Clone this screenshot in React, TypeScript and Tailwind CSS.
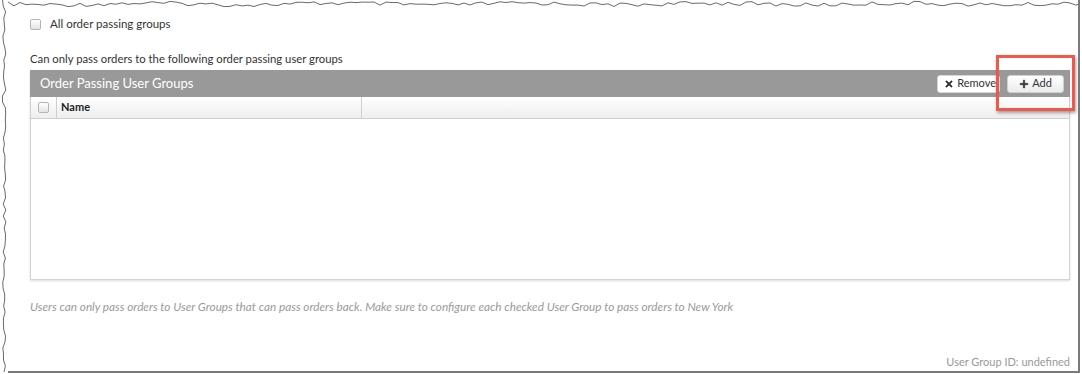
import { FC } from "react";
import { FaPlus, FaXmark } from "react-icons/fa6";

const font = { fontFamily: "Lato, 'Open Sans', sans-serif" };

// torn paper edge, deterministic jitter
const jitter = (i: number) => {
  const s = Math.sin(i * 12.9898) * 43758.5453;
  return s - Math.floor(s);
};

const topPoints = Array.from({ length: 180 }, (_, i) => {
  const x = i * 6;
  const y = 2 + jitter(i) * 4 + Math.sin(i / 5) * 0.8;
  return `${x},${y.toFixed(1)}`;
}).join(" ");

const leftPoints = Array.from({ length: 64 }, (_, i) => {
  const y = i * 6;
  const x = 2 + jitter(i + 300) * 4;
  return `${x.toFixed(1)},${y}`;
}).join(" ");

const Checkbox: FC = () => (
  <span className="inline-block w-[11px] h-[11px] rounded-[2px] border border-[#b5b5b5] bg-gradient-to-b from-white to-[#e4e4e4] shrink-0" />
);

export default function App() {
  return (
    <div className="relative flex w-[1082px] h-[374px] bg-white overflow-hidden" style={font}>
      <svg width="8" height="372" className="shrink-0">
        <polyline points={leftPoints} fill="none" stroke="#6b6b6b" strokeWidth="1" />
      </svg>
      <div className="flex flex-col w-[1072px] h-[373px] border-r-2 border-b-2 border-[#7a7a7a]">
        <svg width="1070" height="8" className="shrink-0">
          <polyline points={topPoints} fill="none" stroke="#6b6b6b" strokeWidth="1" />
        </svg>
        <div className="flex flex-col flex-1 pl-[22px] pr-[8px]">
          <label className="flex items-center gap-[9px] mt-[8px] h-4 text-[11.5px] text-[#333]">
            <Checkbox />
            <span>All order passing groups</span>
          </label>
          <p className="mt-[20px] h-[14px] leading-[14px] text-[11.3px] text-[#333]">
            Can only pass orders to the following order passing user groups
          </p>
          <div className="mt-[4px] flex flex-col shadow-[0_1px_2px_rgba(0,0,0,0.15)]">
            <div className="flex items-center justify-between h-[27px] bg-[#999999] pl-[10px] pr-[6px]">
              <span className="text-[13px] text-white">Order Passing User Groups</span>
              <div className="flex items-center gap-[7px]">
                <button className="flex items-center gap-[3px] h-[18px] pl-[6px] pr-[3px] rounded-[3px] bg-white border border-[#d6d6d6] text-[11px] text-[#333]">
                  <FaXmark className="text-[10px] stroke-[40px]" />
                  Remove
                </button>
                <button className="flex items-center justify-center gap-[3px] h-[18px] w-[57px] rounded-[3px] bg-gradient-to-b from-white to-[#ececec] border border-[#d0d0d0] text-[11px] text-[#333]">
                  <FaPlus className="text-[10px] stroke-[40px]" />
                  Add
                </button>
              </div>
            </div>
            <div className="flex h-[22px] border-b border-x border-[#cfcfcf] bg-gradient-to-b from-white to-[#eeeeee] text-[11px] font-bold text-[#222]">
              <div className="flex items-center justify-center w-[26px] border-r border-[#cfcfcf]">
                <Checkbox />
              </div>
              <div className="flex items-center w-[305px] px-[4px] border-r border-[#cfcfcf]">Name</div>
              <div className="flex-1" />
            </div>
            <div className="h-[161px] bg-white border-x border-b border-[#d4d4d4]" />
          </div>
          <p className="mt-[20px] h-[14px] leading-[14px] text-[11.75px] italic text-[#9a9a9a]">
            Users can only pass orders to User Groups that can pass orders back. Make sure to configure each checked User Group to pass orders to New York
          </p>
          <p className="mt-auto mb-[2px] text-right h-[14px] leading-[14px] text-[11px] text-[#999]">
            User Group ID: undefined
          </p>
        </div>
      </div>
      <div className="absolute left-[996px] top-[55px] w-[79px] h-[56px] border-[3px] border-[#f0584a] shadow-[1px_2px_3px_rgba(0,0,0,0.35)]" />
    </div>
  );
}
